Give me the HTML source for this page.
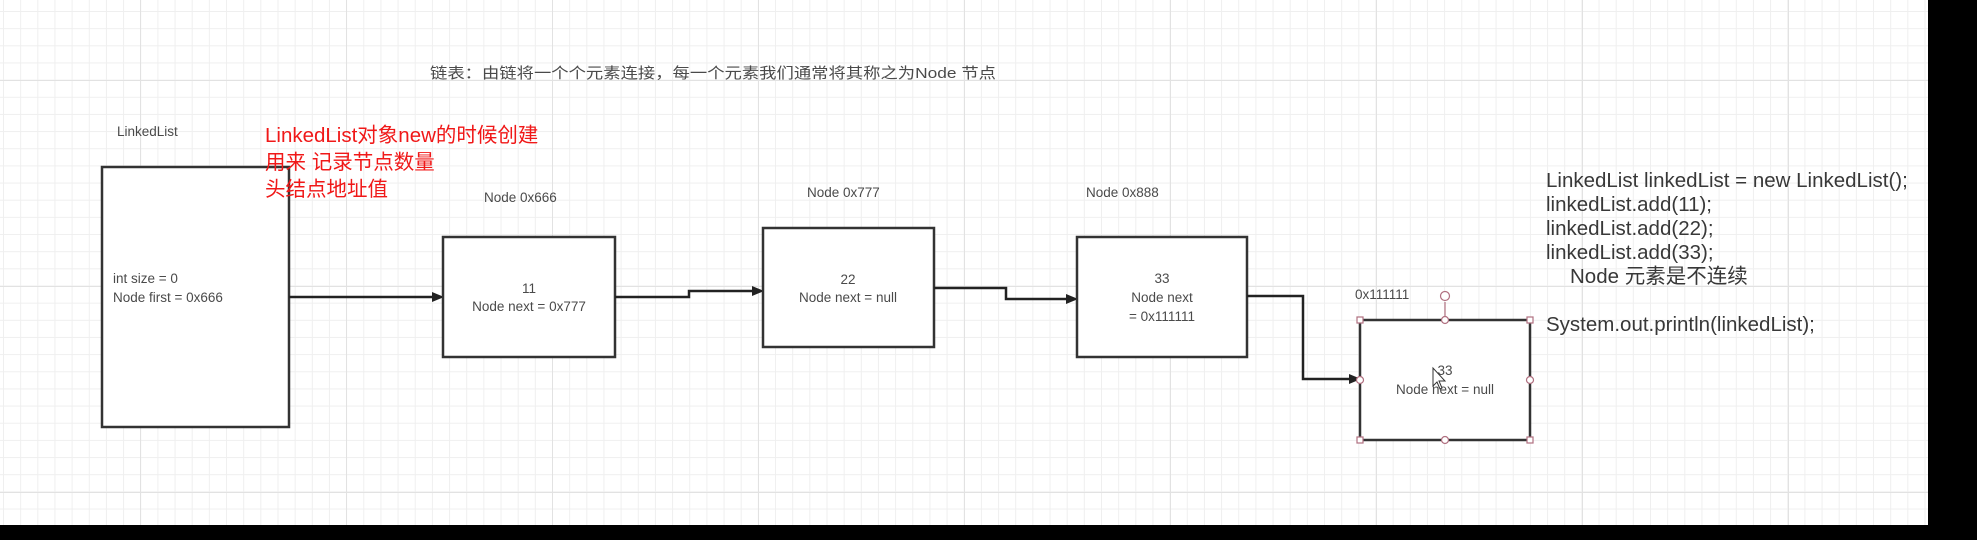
<!DOCTYPE html>
<html><head><meta charset="utf-8"><style>
html,body{margin:0;padding:0;width:1977px;height:540px;overflow:hidden;background:#000}
#c{position:absolute;left:0;top:0;width:1928px;height:525px;background-color:#fff;
background-image:
linear-gradient(to right,#e2e2e2 1px,transparent 1px),
linear-gradient(to bottom,#e2e2e2 1px,transparent 1px),
linear-gradient(to right,#efefef 1px,transparent 1px),
linear-gradient(to bottom,#efefef 1px,transparent 1px);
background-size:206px 206px,206px 206px,17.17px 17.17px,17.17px 17.17px;
background-position:140px 0,0 80px,3px 0,0 11px}
svg{position:absolute;left:0;top:0}
text{font-family:"Liberation Sans","Noto Sans CJK SC",sans-serif;fill:#4a4a4a}
.s{font-size:13.5px}
.c{font-size:20.5px;fill:#383838}
.r{font-size:20.5px;fill:#f01818}
</style></head><body><div id="c"></div>
<svg width="1977" height="540" viewBox="0 0 1977 540">
<defs><marker id="a" markerWidth="10" markerHeight="10" refX="9" refY="5" orient="auto" markerUnits="userSpaceOnUse"><path d="M0,0 L12,5 L0,10 Z" fill="#222"/></marker></defs>
<g fill="#fff" stroke="#333" stroke-width="2.5">
<rect x="102" y="167" width="187" height="260"/>
<rect x="443" y="237" width="172" height="120"/>
<rect x="763" y="228" width="171" height="119"/>
<rect x="1077" y="237" width="170" height="120"/>
<rect x="1360" y="320" width="170" height="120"/>
</g>
<g fill="none" stroke="#222" stroke-width="2.5">
<path d="M289 297 H441" marker-end="url(#a)"/>
<path d="M615 297 H689 V291 H761" marker-end="url(#a)"/>
<path d="M934 288 H1006 V299 H1075" marker-end="url(#a)"/>
<path d="M1247 296 H1303 V379 H1358" marker-end="url(#a)"/>
</g>
<g fill="#fff" stroke="#b07080" stroke-width="1.2">
<line x1="1445" y1="302" x2="1445" y2="320"/>
<circle cx="1445" cy="296" r="4.5"/>
<rect x="1357" y="317" width="6" height="6"/><rect x="1527" y="317" width="6" height="6"/>
<rect x="1357" y="437" width="6" height="6"/><rect x="1527" y="437" width="6" height="6"/>
<circle cx="1445" cy="320" r="3.5"/><circle cx="1445" cy="440" r="3.5"/>
<circle cx="1360" cy="380" r="3.5"/><circle cx="1530" cy="380" r="3.5"/>
</g>
<text class="s" x="430" y="78" textLength="566" lengthAdjust="spacingAndGlyphs" style="font-size:15px">链表：由链将一个个元素连接，每一个元素我们通常将其称之为Node 节点</text>
<text class="s" x="117" y="136">LinkedList</text>
<text class="r" x="265" y="142">LinkedList对象new的时候创建</text>
<text class="r" x="265" y="169">用来 记录节点数量</text>
<text class="r" x="265" y="196">头结点地址值</text>
<text class="s" x="113" y="283">int size = 0</text>
<text class="s" x="113" y="302">Node first  = 0x666</text>
<text class="s" x="484" y="202">Node  0x666</text>
<text class="s" x="529" y="293" text-anchor="middle">11</text>
<text class="s" x="529" y="311" text-anchor="middle">Node next = 0x777</text>
<text class="s" x="807" y="197">Node 0x777</text>
<text class="s" x="848" y="284" text-anchor="middle">22</text>
<text class="s" x="848" y="302" text-anchor="middle">Node next = null</text>
<text class="s" x="1086" y="197">Node  0x888</text>
<text class="s" x="1162" y="283" text-anchor="middle">33</text>
<text class="s" x="1162" y="302" text-anchor="middle">Node next</text>
<text class="s" x="1162" y="321" text-anchor="middle">=  0x111111</text>
<text class="s" x="1355" y="299">0x111111</text>
<text class="s" x="1445" y="375" text-anchor="middle">33</text>
<text class="s" x="1445" y="394" text-anchor="middle">Node next = null</text>
<path d="M1433 368 L1433 386 L1437 382 L1440 389 L1442 388 L1439 381 L1445 381 Z" fill="#fff" stroke="#333" stroke-width="1"/>
<text class="c" x="1546" y="187">LinkedList linkedList = new LinkedList();</text>
<text class="c" x="1546" y="211">linkedList.add(11);</text>
<text class="c" x="1546" y="235">linkedList.add(22);</text>
<text class="c" x="1546" y="259">linkedList.add(33);</text>
<text class="c" x="1570" y="283">Node 元素是不连续</text>
<text class="c" x="1546" y="331">System.out.println(linkedList);</text>
</svg>
</body></html>
